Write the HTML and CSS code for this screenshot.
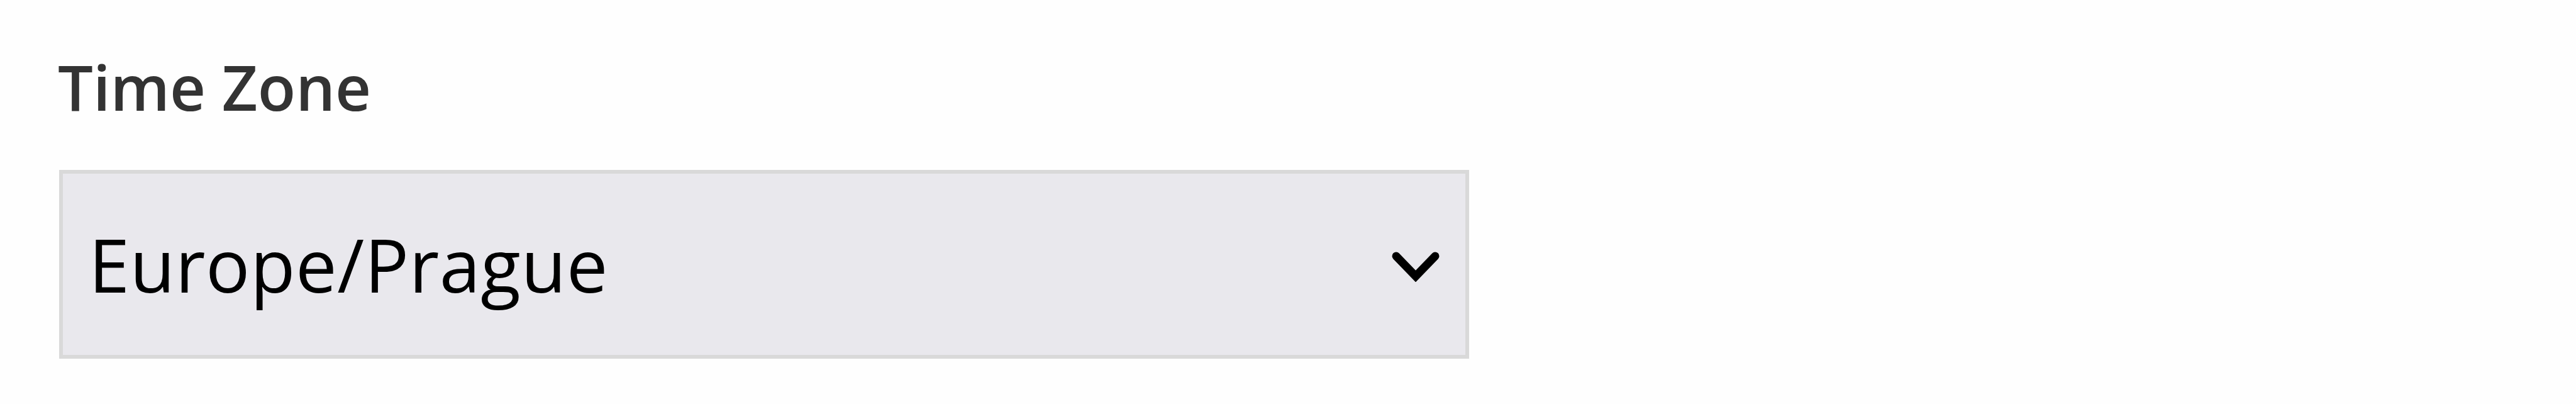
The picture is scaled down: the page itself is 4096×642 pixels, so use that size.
FILE: index.html
```html
<!DOCTYPE html>
<html lang="en">
<head>
<meta charset="utf-8">
<title>Time Zone</title>
<link rel="stylesheet" href="styles.css">
</head>
<body>
<main class="field">
  <label class="field-label" for="timezone">Time Zone</label>
  <div class="select-wrap">
    <select class="select" id="timezone"><option>Europe/Prague</option></select>
    <svg class="chevron" viewBox="0 0 80 50" aria-hidden="true"><path d="M9 9L40 41L71 9"/></svg>
  </div>
</main>
</body>
</html>
```
FILE: styles.css
```css
* { box-sizing: border-box; }
body {
  margin: 0;
  background: #fefefe;
  font-family: "Open Sans", sans-serif;
}
.field {
  display: flex;
  flex-direction: column;
  align-items: flex-start;
  padding: 67px 0 0 92px;
}
.field-label {
  height: 203px;
  font-size: 99px;
  font-weight: 600;
  line-height: 142px;
  color: #333;
  white-space: nowrap;
}
.select-wrap {
  display: grid;
  align-items: center;
  width: 2242px;
  height: 300px;
  margin-left: 2px;
}
.select {
  grid-area: 1 / 1;
  width: 100%;
  height: 100%;
  margin: 0;
  padding: 0 160px 0 41px;
  appearance: none;
  border: 6px solid #d9d9d9;
  border-radius: 0;
  background: #e9e8ed;
  color: #000;
  font: 400 117px/158px "Open Sans", sans-serif;
  letter-spacing: 0.5px;
}
.chevron {
  grid-area: 1 / 1;
  justify-self: end;
  width: 80px;
  height: 50px;
  margin: 6px 45px 0 0;
  pointer-events: none;
  fill: none;
  stroke: #000;
  stroke-width: 13;
  stroke-linecap: round;
}
```
